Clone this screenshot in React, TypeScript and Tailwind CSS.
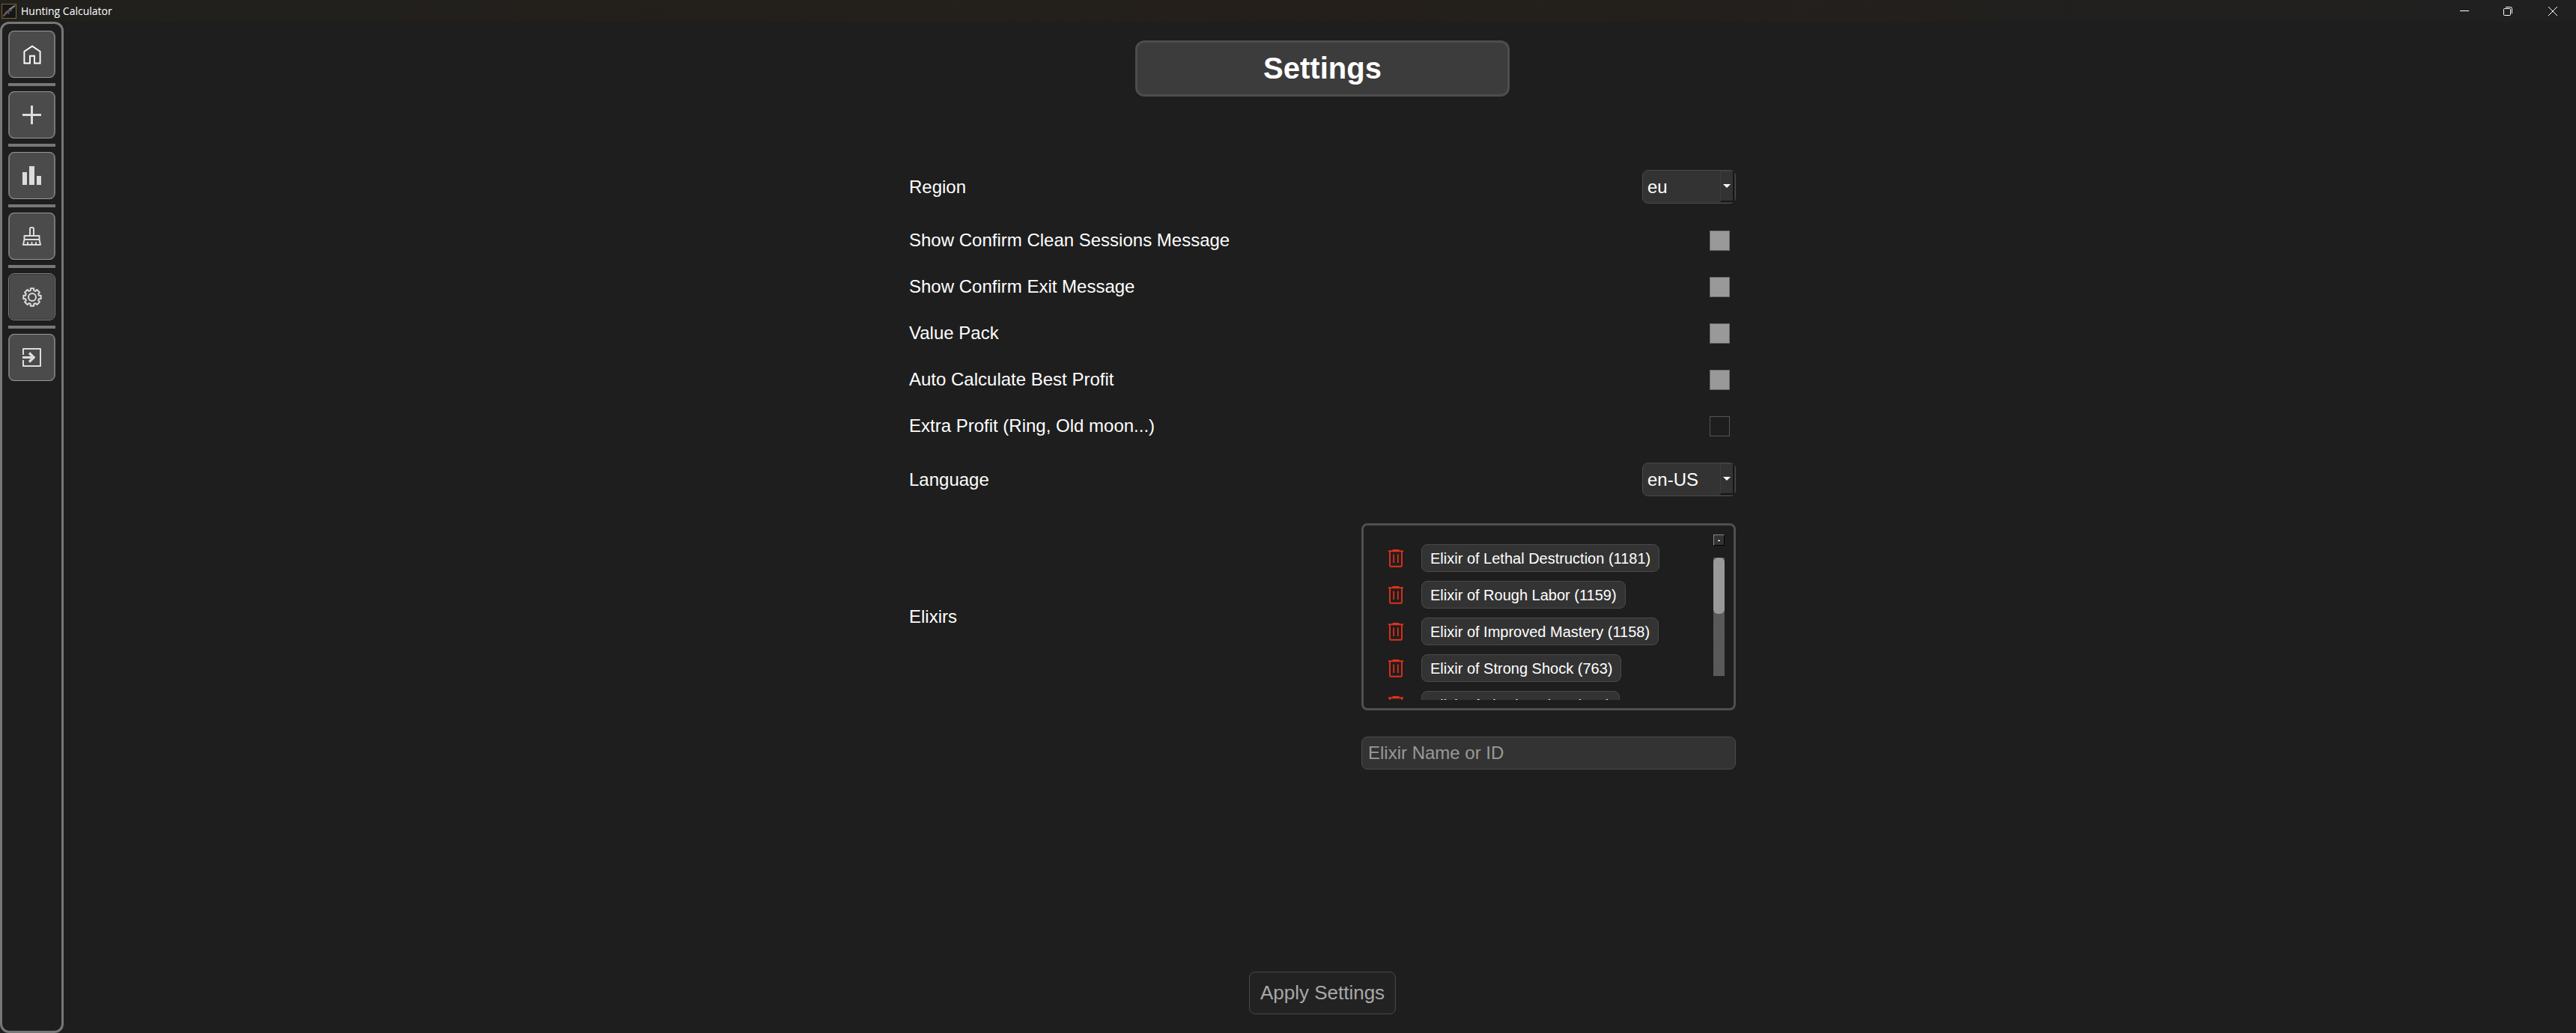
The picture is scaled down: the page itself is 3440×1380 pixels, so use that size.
import { useState, type ReactNode } from "react";

const HomeIcon = () => (
  <svg viewBox="0 0 24 26" className="h-[26px] w-6" fill="none" stroke="#ffffff" strokeWidth="1.9">
    <path d="M1.4 24.5V8.8L12 1.6L22.6 8.8V24.5H15V14.8H9V24.5Z" />
  </svg>
);

const PlusIcon = () => (
  <svg viewBox="0 0 25 25" className="h-[25px] w-[25px]" fill="#dcdcdc">
    <path d="M11 0H14V11H25V14H14V25H11V14H0V11H11Z" />
  </svg>
);

const ChartIcon = () => (
  <svg viewBox="0 0 25 25" className="h-[25px] w-[25px]" fill="#dcdcdc">
    <path d="M0 8H6V25H0ZM9 0H16V25H9ZM19 13H25V25H19Z" />
  </svg>
);

const BroomIcon = () => (
  <svg viewBox="0 0 25 25" className="h-[25px] w-[25px]" fill="none" stroke="#dcdcdc" strokeWidth="2" strokeLinejoin="round" strokeLinecap="round">
    <path d="M10 11.5V2.5Q10 1 11.5 1H13.5Q15 1 15 2.5V11.5" />
    <path d="M2.5 12H22.5V17H2.5ZM2.5 17L1 24H24L22.5 17M7 21V24M12.5 21V24M18 21V24" />
  </svg>
);

const GearIcon = () => (
  <svg viewBox="0 0 26 26" className="h-[26px] w-[26px]" fill="none" stroke="#dcdcdc" strokeWidth="2" strokeLinejoin="round">
    <path d="M10.8 1.3H15.2V4L17.4 4.9L19.4 3L23 6.6L21.1 8.6L22 10.8H24.7V15.2H22L21.1 17.4L23 19.4L19.4 23L17.4 21.1L15.2 22V24.7H10.8V22L8.6 21.1L6.6 23L3 19.4L4.9 17.4L4 15.2H1.3V10.8H4L4.9 8.6L3 6.6L6.6 3L8.6 4.9L10.8 4Z" />
    <circle cx="13" cy="13" r="5" />
  </svg>
);

const ExitIcon = () => (
  <svg viewBox="0 0 25 25" className="h-[25px] w-[25px]" fill="none" stroke="#dcdcdc" strokeWidth="2">
    <path d="M1 9V1H24V24H1V16" strokeLinejoin="round" />
    <path d="M0 12.5H14" strokeWidth="3" />
    <path d="M9 6.5L15 12.5L9 18.5" strokeWidth="3.4" />
  </svg>
);

const TrashIcon = () => (
  <svg viewBox="0 0 20 24" className="h-6 w-5" fill="none" stroke="#e0301e" strokeWidth="1.9">
    <path d="M0 2.2H20M5.5 1H14.5" />
    <path d="M2 2V21.5Q2 22.8 3.3 22.8H16.7Q18 22.8 18 21.5V2" />
    <path d="M7.2 6.5V18M12.8 6.5V18" strokeWidth="1.7" />
  </svg>
);

const AppIcon = () => (
  <svg viewBox="0 0 20 20" className="h-5 w-5">
    <rect x="0.5" y="0.5" width="19" height="19" fill="#14161a" stroke="#7d6530" />
    <path d="M1.5 16L6 10L11 7L18 2L18.5 3.5L12 9.5L8 12.5L3 17.5Z" fill="#6d5450" />
    <path d="M10 7.5L18 2.2" stroke="#9a9fa6" strokeWidth="1.2" />
    <path d="M7 11L10 12L9 14M12 9L14 10" stroke="#4d6674" strokeWidth="1.2" fill="none" />
  </svg>
);

const navItems: { label: string; icon: ReactNode }[] = [
  { label: "Home", icon: <HomeIcon /> },
  { label: "New session", icon: <PlusIcon /> },
  { label: "Statistics", icon: <ChartIcon /> },
  { label: "Clean sessions", icon: <BroomIcon /> },
  { label: "Settings", icon: <GearIcon /> },
  { label: "Exit", icon: <ExitIcon /> },
];

const toggles = [
  { id: "clean", label: "Show Confirm Clean Sessions Message", on: true },
  { id: "exit", label: "Show Confirm Exit Message", on: true },
  { id: "value-pack", label: "Value Pack", on: true },
  { id: "best-profit", label: "Auto Calculate Best Profit", on: true },
  { id: "extra-profit", label: "Extra Profit (Ring, Old moon...)", on: false },
];

const elixirs = [
  "Elixir of Lethal Destruction (1181)",
  "Elixir of Rough Labor (1159)",
  "Elixir of Improved Mastery (1158)",
  "Elixir of Strong Shock (763)",
  "Elixir of Flowing Time (750)",
];

function TitleBar() {
  return (
    <header className="flex h-[29px] shrink-0 items-center justify-between bg-gradient-to-r from-[#21201d] via-[#241f1a] to-[#202020] pl-0.5">
      <div className="flex items-center gap-1.5">
        <AppIcon />
        <span className="font-['Open_Sans',sans-serif] text-sm leading-5 text-white">Hunting Calculator</span>
      </div>
      <div className="flex">
        <button aria-label="Minimize" className="flex h-7 w-[58px] items-center justify-center">
          <svg viewBox="0 0 12 12" className="h-3 w-3" stroke="#fff"><path d="M0 5.5H12" /></svg>
        </button>
        <button aria-label="Restore" className="flex h-7 w-[58px] items-center justify-center">
          <svg viewBox="0 0 12 12" className="h-3 w-3" fill="none" stroke="#fff">
            <rect x="0.5" y="2.5" width="9" height="9" rx="1" />
            <path d="M3 0.5H9.5Q11.5 0.5 11.5 2.5V9" />
          </svg>
        </button>
        <button aria-label="Close" className="flex h-7 w-[62px] items-center justify-center">
          <svg viewBox="0 0 12 12" className="h-3 w-3" stroke="#fff"><path d="M0 0L12 12M12 0L0 12" /></svg>
        </button>
      </div>
    </header>
  );
}

function Sidebar() {
  return (
    <nav className="flex w-[85px] shrink-0 flex-col gap-[7px] rounded-xl border-3 border-[#777777] px-2 py-[9px]">
      {navItems.map((item, i) => (
        <div key={item.label} className="flex flex-col gap-[7px]">
          {i > 0 && <div className="h-1 bg-[#777777]" />}
          <button
            aria-label={item.label}
            className={
              item.label === "Settings"
                ? "flex h-[63px] items-center justify-center rounded-lg border border-[#808080] bg-[#4b4b4b] outline-1 -outline-offset-2 outline-[#1e1e1e] outline-dotted"
                : "flex h-[63px] items-center justify-center rounded-lg border-x-2 border-y border-x-[#777777] border-y-[#999999] bg-[#4b4b4b]"
            }
          >
            {item.icon}
          </button>
        </div>
      ))}
    </nav>
  );
}

function SelectRow({ id, label, options }: { id: string; label: string; options: string[] }) {
  return (
    <div className="flex items-center justify-between py-[18px]">
      <label htmlFor={id}>{label}</label>
      <div className="relative">
        <select
          id={id}
          className="block h-[45px] w-[125px] appearance-none rounded-lg border border-[#4a4a4a] bg-[#333333] pl-1.5 text-2xl text-white outline-none"
        >
          {options.map((o) => (
            <option key={o}>{o}</option>
          ))}
        </select>
        <div className="pointer-events-none absolute top-px right-0.5 flex h-[42px] w-[19px] items-center justify-center border-t border-r-2 border-b-2 border-l border-t-[#3c3c3c] border-r-[#161616] border-b-[#161616] border-l-[#3c3c3c] bg-[#333333]">
          <svg viewBox="0 0 10 5" className="h-[5px] w-2.5" fill="#fff"><path d="M0 0H10L5 5Z" /></svg>
        </div>
      </div>
    </div>
  );
}

function ElixirList() {
  return (
    <div className="flex h-[250px] rounded-lg border-3 border-[#505050] pt-3 pr-3 pb-[11px] pl-[33px]">
      <ul className="flex flex-1 flex-col gap-3 overflow-hidden pt-[13px] text-xl leading-7">
        {elixirs.map((name) => (
          <li key={name} className="flex shrink-0 items-center gap-6">
            <button aria-label={"Remove " + name}>
              <TrashIcon />
            </button>
            <span className="h-[37px] rounded-lg border border-[#4a4a4a] bg-[#333333] px-[11px] py-1">{name}</span>
          </li>
        ))}
      </ul>
      <div className="flex w-[15px] flex-col">
        <button
          aria-label="Scroll up"
          className="flex h-[15px] items-center justify-center border border-t-[#8a8a8a] border-r-black border-b-black border-l-[#8a8a8a] bg-[#333333]"
        >
          <svg viewBox="0 0 3 2" className="h-0.5 w-[3px]" fill="#fff"><path d="M1 0H2V1H3V2H0V1H1Z" /></svg>
        </button>
        <div className="mt-4 h-[158px] bg-[repeating-conic-gradient(#808080_0_25%,#333333_0_50%)] bg-[length:2px_2px]">
          <div className="h-[75px] rounded-md bg-[#999999]" />
        </div>
      </div>
    </div>
  );
}

export default function App() {
  const [checked, setChecked] = useState<Record<string, boolean>>(
    Object.fromEntries(toggles.map((t) => [t.id, t.on])),
  );

  return (
    <div className="flex min-h-screen flex-col bg-[#1e1e1e] font-['Liberation_Sans',Arial,sans-serif] text-white">
      <TitleBar />
      <div className="flex flex-1 gap-[7px]">
        <Sidebar />
        <main className="flex flex-1 flex-col items-center py-[25px]">
          <h1 className="w-[500px] rounded-xl border-3 border-[#4d4d4d] bg-[#3c3c3c] py-3.5 text-center text-[40px] leading-[41px] font-bold">
            Settings
          </h1>
          <form className="mt-20 flex w-full max-w-[1104px] flex-1 flex-col text-2xl leading-7" onSubmit={(e) => e.preventDefault()}>
            <SelectRow id="region" label="Region" options={["eu", "na"]} />
            {toggles.map((t) => (
              <div key={t.id} className="flex h-[62px] items-center justify-between pr-2">
                <label htmlFor={t.id}>{t.label}</label>
                <input
                  id={t.id}
                  type="checkbox"
                  checked={checked[t.id]}
                  onChange={() => setChecked((c) => ({ ...c, [t.id]: !c[t.id] }))}
                  className="h-[27px] w-[27px] appearance-none border border-[#555555] checked:border-[#6b6b6b] checked:bg-[#999999]"
                />
              </div>
            ))}
            <SelectRow id="language" label="Language" options={["en-US", "pt-BR"]} />
            <div className="mt-[18px] grid grid-cols-[1fr_500px] items-center gap-y-[35px]">
              <label htmlFor="elixir">Elixirs</label>
              <ElixirList />
              <input
                id="elixir"
                placeholder="Elixir Name or ID"
                className="col-start-2 h-11 rounded-lg border border-[#4a4a4a] bg-[#333333] px-2 text-2xl text-white outline-none placeholder:text-[#999999]"
              />
            </div>
            <button
              type="submit"
              className="mt-auto self-center rounded-lg border border-[#4a4a4a] bg-[#222222] px-3.5 py-3 text-[26px] leading-[31px] text-[#a8a8a8]"
            >
              Apply Settings
            </button>
          </form>
        </main>
      </div>
    </div>
  );
}
